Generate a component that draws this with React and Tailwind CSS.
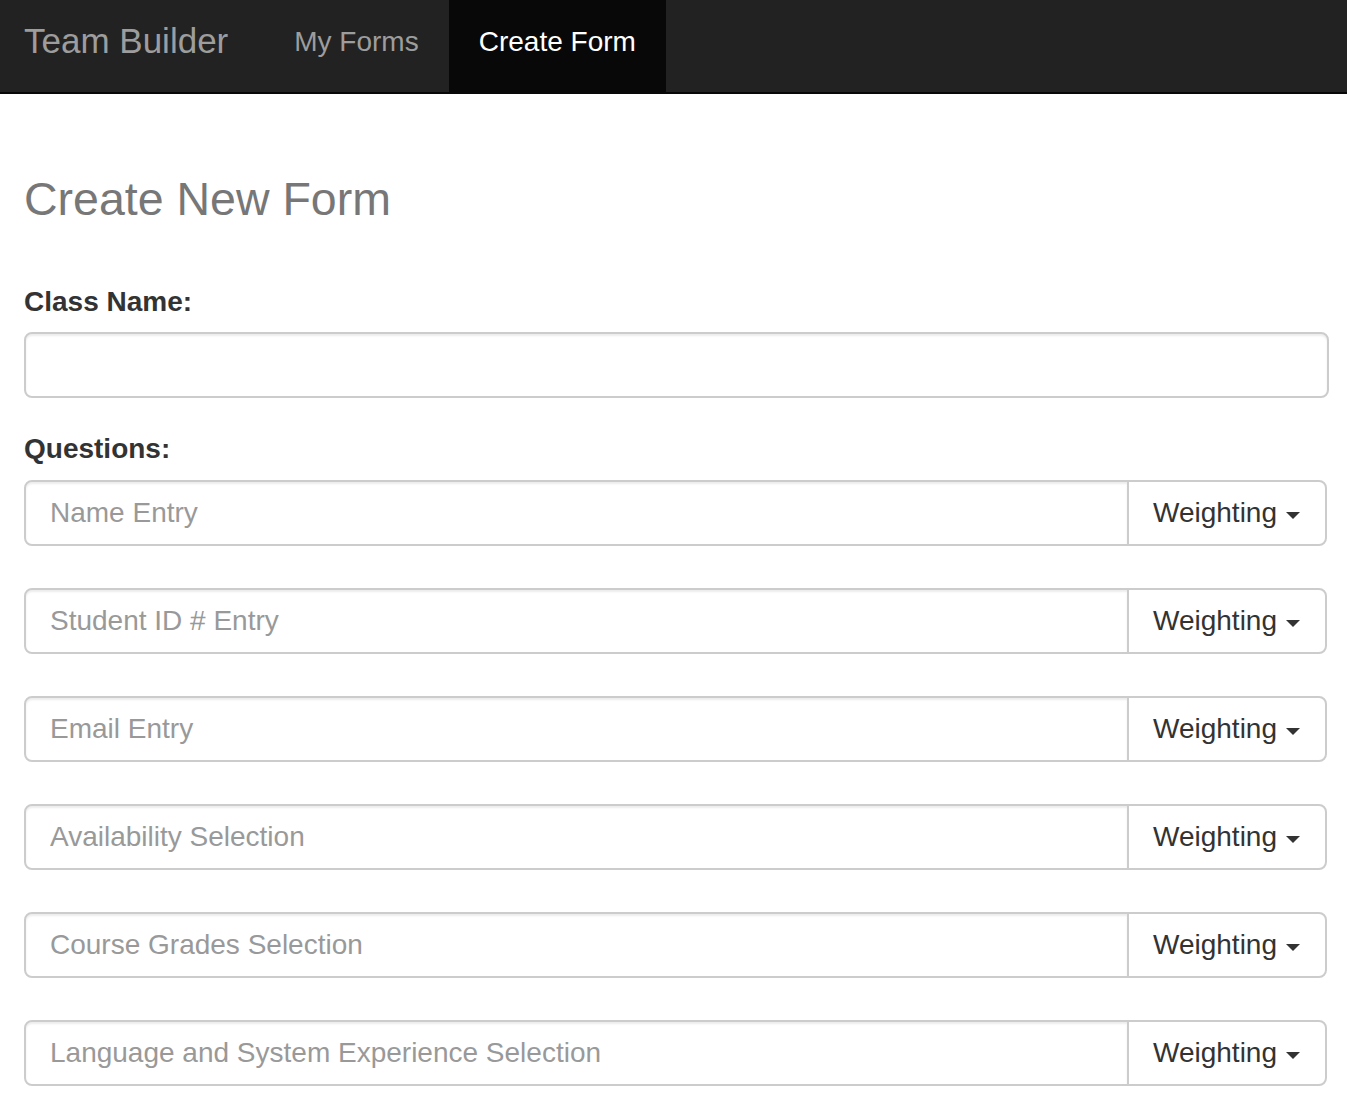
import React from "react";

const questions = [
  "Name Entry",
  "Student ID # Entry",
  "Email Entry",
  "Availability Selection",
  "Course Grades Selection",
  "Language and System Experience Selection",
];

function QuestionRow({ label }) {
  return (
    <div className="flex h-[66px] mr-[2px]">
      <input
        type="text"
        placeholder={label}
        className="flex-1 min-w-0 h-full border-2 border-[#ccc] rounded-l-[8px] bg-white pl-[24px] text-[28px] text-[#555] placeholder:text-[#999] shadow-[inset_0_2px_2px_rgba(0,0,0,0.075)] outline-none"
      />
      <button
        type="button"
        className="-ml-[2px] w-[200px] h-full shrink-0 flex items-center border-2 border-[#ccc] rounded-r-[8px] bg-white pl-[24px] text-[28px] text-[#333]"
      >
        <span>Weighting</span>
        <span className="ml-[9px] mt-[4px] w-0 h-0 border-t-[7px] border-t-[#333] border-x-[7px] border-x-transparent"></span>
      </button>
    </div>
  );
}

export default function App() {
  return (
    <div
      className="min-h-[1101px] bg-white"
      style={{ fontFamily: '"Liberation Sans", Arial, Helvetica, sans-serif' }}
    >
      <nav className="flex h-[94px] bg-[#222] border-b-2 border-[#080808]">
        <div className="pl-[24px] pr-[36px] pt-[23px] text-[35px] leading-none text-[#9d9d9d]">
          Team Builder
        </div>
        <a className="px-[30px] pt-[28px] text-[28px] leading-none text-[#9d9d9d]">
          My Forms
        </a>
        <a className="px-[30px] pt-[28px] text-[28px] leading-none text-white bg-[#080808]">
          Create Form
        </a>
      </nav>

      <main className="pl-[24px] pr-[18px]">
        <h1 className="mt-[82px] h-[46px] text-[46.5px] leading-[46px] text-[#777] font-normal">
          Create New Form
        </h1>

        <label className="block mt-[66px] text-[28px] leading-none font-bold text-[#333]">
          Class Name:
        </label>
        <input
          type="text"
          className="block mt-[16px] w-full h-[66px] border-2 border-[#ccc] rounded-[8px] bg-white px-[24px] text-[28px] shadow-[inset_0_2px_2px_rgba(0,0,0,0.075)] outline-none"
        />

        <label className="block mt-[37px] text-[28px] leading-none font-bold text-[#333]">
          Questions:
        </label>
        <div className="mt-[17px] flex flex-col gap-[42px]">
          {questions.map((q) => (
            <QuestionRow key={q} label={q} />
          ))}
        </div>
      </main>
    </div>
  );
}
